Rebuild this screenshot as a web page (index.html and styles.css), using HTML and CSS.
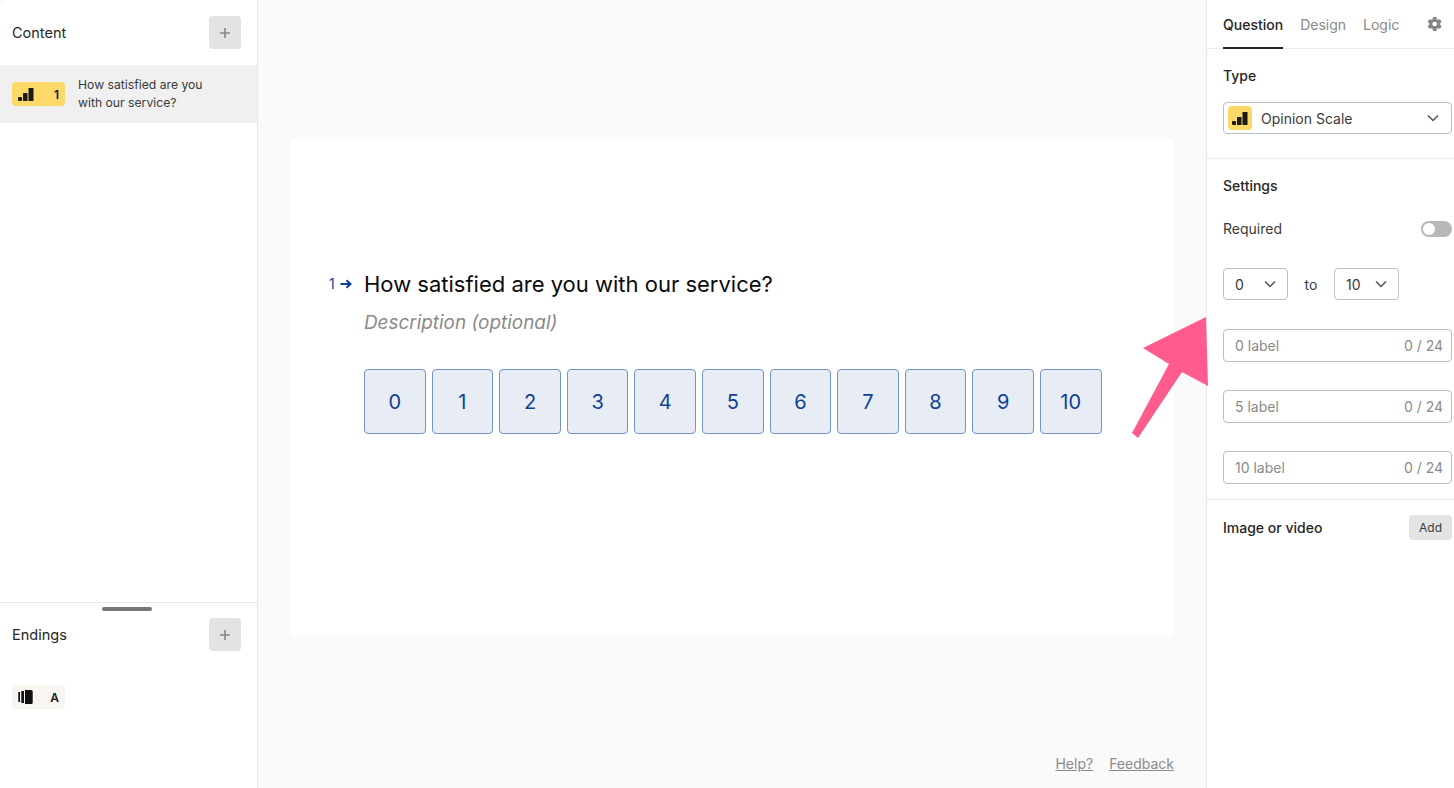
FILE: index.html
```html
<!DOCTYPE html>
<html lang="en">
  <head>
    <meta charset="UTF-8" />
    <title>Form builder</title>
    <link rel="stylesheet" href="styles.css">
  </head>
  <body>
    <div class="app">
      <aside class="sidebar">
        <div class="side-head">
          <span>Content</span>
          <button class="plus-btn"><svg width="10" height="10" viewBox="0 0 10 10"><path d="M5 0v10M0 5h10"/></svg></button>
        </div>
        <div class="question-row">
          <div class="badge badge-yellow">
            <svg class="bars" width="16" height="14" viewBox="0 0 16 14"><rect x="0" y="10" width="4" height="4" rx="1"/><rect x="5" y="6" width="4.5" height="8" rx="0.6"/><rect x="10.5" y="1" width="5" height="13" rx="0.6"/></svg>
            <span>1</span>
          </div>
          <p>How satisfied are you with our service?</p>
        </div>
        <div class="endings">
          <div class="handle"></div>
          <div class="side-head">
            <span>Endings</span>
            <button class="plus-btn"><svg width="10" height="10" viewBox="0 0 10 10"><path d="M5 0v10M0 5h10"/></svg></button>
          </div>
          <div class="badge badge-cream">
            <svg width="16" height="14" viewBox="0 0 16 14"><rect x="0.3" y="2" width="1.7" height="10"/><rect x="3.3" y="1" width="2.7" height="12"/><path d="M7 0H13.2a1.5 1.5 0 0 1 1.5 1.5v11a1.5 1.5 0 0 1-1.5 1.5H7z"/></svg>
            <span>A</span>
          </div>
        </div>
      </aside>

      <main class="canvas">
        <section class="card">
          <div class="question">
            <div class="number">1<svg width="12" height="10" viewBox="0 0 12 10"><path d="M0.5 5h10M6.5 1.2 10.5 5 6.5 8.8" fill="none" stroke="#0f3f97" stroke-width="2"/></svg></div>
            <div class="question-body">
              <h1>How satisfied are you with our service?</h1>
              <p class="description">Description (optional)</p>
              <div class="scale">
                <div class="scale-item">0</div>
                <div class="scale-item">1</div>
                <div class="scale-item">2</div>
                <div class="scale-item">3</div>
                <div class="scale-item">4</div>
                <div class="scale-item">5</div>
                <div class="scale-item">6</div>
                <div class="scale-item">7</div>
                <div class="scale-item">8</div>
                <div class="scale-item">9</div>
                <div class="scale-item">10</div>
              </div>
            </div>
          </div>
        </section>
        <div class="links">
          <a href="#">Help?</a>
          <a href="#">Feedback</a>
        </div>
      </main>

      <aside class="panel">
        <nav class="tabs">
          <a class="tab active" href="#">Question</a>
          <a class="tab" href="#">Design</a>
          <a class="tab" href="#">Logic</a>
          <svg class="gear" width="16" height="16" viewBox="0 0 24 24"><path fill-rule="evenodd" d="M19.4 13a7.6 7.6 0 0 0 0-2l2.2-1.7a.6.6 0 0 0 .1-.7l-2.1-3.6a.6.6 0 0 0-.7-.2l-2.6 1a7.6 7.6 0 0 0-1.7-1l-.4-2.8a.6.6 0 0 0-.6-.5H9.4a.6.6 0 0 0-.6.5l-.4 2.8a7.6 7.6 0 0 0-1.7 1l-2.6-1a.6.6 0 0 0-.7.2L1.3 8.6a.6.6 0 0 0 .1.7L3.6 11a7.6 7.6 0 0 0 0 2l-2.2 1.7a.6.6 0 0 0-.1.7l2.1 3.6a.6.6 0 0 0 .7.2l2.6-1a7.6 7.6 0 0 0 1.7 1l.4 2.8a.6.6 0 0 0 .6.5h4.2a.6.6 0 0 0 .6-.5l.4-2.8a7.6 7.6 0 0 0 1.7-1l2.6 1a.6.6 0 0 0 .7-.2l2.1-3.6a.6.6 0 0 0-.1-.7zM11.5 15.5a3.5 3.5 0 1 1 0-7 3.5 3.5 0 0 1 0 7z"/></svg>
        </nav>

        <section class="panel-section type-section">
          <h2>Type</h2>
          <div class="select type-select">
            <span class="type-icon">
              <svg class="bars" width="16" height="14" viewBox="0 0 16 14"><rect x="0" y="10" width="4" height="4" rx="1"/><rect x="5" y="6" width="4.5" height="8" rx="0.6"/><rect x="10.5" y="1" width="5" height="13" rx="0.6"/></svg>
            </span>
            <span class="select-text">Opinion Scale</span>
            <svg class="chevron" width="12" height="8" viewBox="0 0 12 8"><path d="M1 1.5 6 6.5 11 1.5"/></svg>
          </div>
        </section>

        <section class="panel-section settings">
          <h2>Settings</h2>
          <div class="setting-row">
            <span>Required</span>
            <span class="toggle"><span class="knob"></span></span>
          </div>
          <div class="range-row">
            <div class="select small-select">
              <span class="select-text">0</span>
              <svg class="chevron" width="12" height="8" viewBox="0 0 12 8"><path d="M1 1.5 6 6.5 11 1.5"/></svg>
            </div>
            <span class="to">to</span>
            <div class="select small-select">
              <span class="select-text">10</span>
              <svg class="chevron" width="12" height="8" viewBox="0 0 12 8"><path d="M1 1.5 6 6.5 11 1.5"/></svg>
            </div>
          </div>
          <div class="label-input"><span>0 label</span><span>0 / 24</span></div>
          <div class="label-input"><span>5 label</span><span>0 / 24</span></div>
          <div class="label-input"><span>10 label</span><span>0 / 24</span></div>
        </section>

        <section class="media-row">
          <span>Image or video</span>
          <button class="add-btn">Add</button>
        </section>
      </aside>
    </div>

    <svg class="arrow" width="90" height="130" viewBox="0 0 90 130"><path d="M13 38 76 7 78 76 52 62 8 128 2 123 39 54z"/></svg>
  </body>
</html>
```

FILE: styles.css
```css
* {
  margin: 0;
  padding: 0;
  box-sizing: border-box;
  font-family: Inter, "Liberation Sans", sans-serif;
}

body {
  width: 1454px;
  height: 788px;
  overflow: hidden;
  position: relative;
  background-color: #fafafa;
  color: #262626;
}

.app {
  display: flex;
  height: 788px;
}

/* left column */
.sidebar {
  width: 258px;
  display: flex;
  flex-direction: column;
  background-color: white;
  border-right: 1px solid #e8e8e8;
  border-top-left-radius: 10px;
}

.side-head {
  height: 65px;
  padding: 0 16px 0 12px;
  display: flex;
  align-items: center;
  justify-content: space-between;
  font-size: 14.5px;
}

.plus-btn {
  width: 32px;
  height: 33px;
  border: none;
  border-radius: 4px;
  background-color: #e3e3e3;
  display: flex;
  align-items: center;
  justify-content: center;
}

.plus-btn svg {
  fill: none;
  stroke: #868686;
  stroke-width: 1.6;
}

.question-row {
  height: 58px;
  padding: 0 12px;
  display: flex;
  align-items: center;
  gap: 13px;
  background-color: #f0f0f0;
}

.question-row p {
  width: 140px;
  font-size: 12.2px;
  line-height: 18px;
  color: #3a3a3a;
}

.badge {
  width: 53px;
  height: 24px;
  flex-shrink: 0;
  padding: 0 6px;
  border-radius: 4px;
  display: flex;
  align-items: center;
  justify-content: space-between;
  font-size: 12px;
  font-weight: 600;
  color: #191919;
}

.badge-yellow {
  background-color: #fcd968;
}

.badge-cream {
  background-color: #f9f5f1;
}

.bars {
  fill: #1a1a0f;
}

.endings {
  margin-top: auto;
  height: 186px;
  border-top: 1px solid #e8e8e8;
}

.endings .side-head {
  height: 47px;
}

.handle {
  width: 50px;
  height: 4px;
  margin: 4px 0 0 102px;
  border-radius: 2px;
  background-color: #777;
}

.endings .badge {
  margin: 27px 0 0 12px;
}

.endings .badge svg {
  fill: #111;
}

/* middle column */
.canvas {
  flex: 1;
  padding: 139px 32px 0;
  display: flex;
  flex-direction: column;
}

.card {
  height: 497px;
  background-color: white;
  border-radius: 8px;
  padding: 131px 0 0 39px;
}

.question {
  display: flex;
}

.number {
  width: 35px;
  padding-top: 6px;
  font-size: 14px;
  line-height: 16px;
  color: #0f3f97;
  display: flex;
  align-items: center;
  align-self: flex-start;
  gap: 5px;
}

h1 {
  font-size: 22px;
  font-weight: 400;
  line-height: 28px;
  color: #0b0b0b;
}

.description {
  margin-top: 13px;
  font-size: 18.9px;
  font-style: italic;
  line-height: 24px;
  color: #8a8a8a;
}

.scale {
  margin-top: 34px;
  display: flex;
  gap: 6px;
}

.scale-item {
  width: 61.6px;
  height: 65px;
  display: flex;
  align-items: center;
  justify-content: center;
  background-color: #e7ecf5;
  border: 1px solid #7393cc;
  border-radius: 4px;
  font-size: 20px;
  color: #0f3f97;
}

.links {
  margin-top: 119px;
  display: flex;
  justify-content: flex-end;
  gap: 16px;
  font-size: 14px;
}

.links a {
  color: #8a8a8a;
}

/* right column */
.panel {
  width: 248px;
  background-color: white;
  border-left: 1px solid #e8e8e8;
}

.tabs {
  height: 49px;
  padding: 0 0 0 16px;
  display: flex;
  gap: 17px;
  border-bottom: 1px solid #ececec;
  position: relative;
}

.tab {
  height: 49px;
  padding-top: 16px;
  font-size: 14px;
  line-height: 18px;
  color: #8a8a8a;
  text-decoration: none;
}

.tab.active {
  color: #262626;
  font-weight: 500;
  border-bottom: 2px solid #262626;
}

.gear {
  position: absolute;
  left: 220px;
  top: 16px;
  fill: #858585;
}

.panel-section {
  padding: 0 2px 0 16px;
}

h2 {
  font-size: 14px;
  font-weight: 500;
  line-height: 18px;
  color: #262626;
}

.type-section {
  height: 110px;
  padding-top: 18px;
  border-bottom: 1px solid #ececec;
}

.select {
  display: flex;
  align-items: center;
  border: 1px solid #bdbdbd;
  border-radius: 4px;
  background-color: white;
  font-size: 14px;
  color: #3a3a3a;
}

.type-select {
  height: 32px;
  margin-top: 17px;
  padding: 0 12px 0 4px;
}

.type-icon {
  width: 24px;
  height: 24px;
  margin-right: 9px;
  border-radius: 4px;
  background-color: #fcd968;
  display: flex;
  align-items: center;
  justify-content: center;
}

.select-text {
  flex: 1;
}

.chevron {
  fill: none;
  stroke: #555;
  stroke-width: 1.5;
}

.settings {
  height: 341px;
  padding-top: 18px;
  border-bottom: 1px solid #ececec;
}

.setting-row {
  margin-top: 25px;
  display: flex;
  align-items: center;
  justify-content: space-between;
  font-size: 14px;
  line-height: 18px;
  color: #3a3a3a;
}

.toggle {
  width: 31px;
  height: 16px;
  padding: 2px;
  border-radius: 8px;
  background-color: #b8b8b8;
}

.knob {
  display: block;
  width: 12px;
  height: 12px;
  border-radius: 50%;
  background-color: white;
}

.range-row {
  margin-top: 30px;
  display: flex;
  align-items: center;
}

.small-select {
  width: 65px;
  height: 32px;
  padding: 0 11px;
}

.to {
  width: 46px;
  text-align: center;
  font-size: 14px;
  color: #3a3a3a;
}

.label-input {
  height: 33px;
  margin-top: 28px;
  padding: 0 8px 0 11px;
  display: flex;
  align-items: center;
  justify-content: space-between;
  border: 1px solid #bdbdbd;
  border-radius: 4px;
  font-size: 14px;
  color: #8a8a8a;
}

.range-row + .label-input {
  margin-top: 29px;
}

.media-row {
  height: 54px;
  padding: 0 2px 0 16px;
  display: flex;
  align-items: center;
  justify-content: space-between;
  font-size: 14px;
  font-weight: 500;
}

.add-btn {
  width: 43px;
  height: 25px;
  border: none;
  border-radius: 4px;
  background-color: #e3e3e3;
  font-size: 12px;
  color: #3a3a3a;
}

/* annotation on top of the screenshot */
.arrow {
  position: absolute;
  left: 1130px;
  top: 310px;
  fill: #ff5c8d;
}
```
